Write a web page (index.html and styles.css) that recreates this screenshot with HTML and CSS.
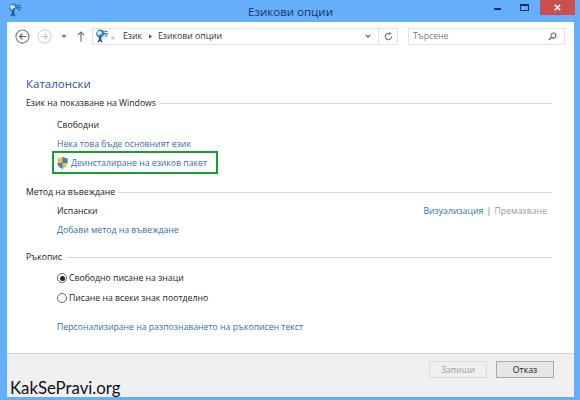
FILE: index.html
```html
<!DOCTYPE html>
<html lang="bg">
<head>
<meta charset="utf-8">
<title>Езикови опции</title>
<link rel="stylesheet" href="styles.css">
</head>
<body>
<div class="window">
  <header class="titlebar">
    <svg class="app-icon" viewBox="0 0 18 18"><circle cx="7" cy="6" r="5.5" fill="#2f7fc4"/><path d="M3 3h5l1 3-3 1-1 2-2-3zM9 8l3 1-2 2z" fill="#dff0fb"/><path d="M12 3h4M12 6h5M13 9h3" stroke="#12539a" stroke-width="1.3"/><path d="M4 17l2.500-6 2.500 6M5 15h3" stroke="#164a8e" stroke-width="1.500" fill="none"/></svg>
    <span class="title">Езикови опции</span>
    <div class="controls">
      <span class="ctl"><i class="min"></i></span>
      <span class="ctl"><i class="max"></i></span>
      <span class="close"><svg viewBox="0 0 9 9"><path d="M1 1l7 7M8 1l-7 7" stroke="#fff" stroke-width="2"/></svg></span>
    </div>
  </header>
  <div class="client">
    <nav class="navbar">
      <svg class="nav-btn" viewBox="0 0 16 16"><circle cx="8" cy="8" r="7" fill="#fff" stroke="#77797c" stroke-width="1.200"/><path d="M12 8H5M8 5L5 8l3 3" fill="none" stroke="#5d5f62" stroke-width="1.300"/></svg>
      <svg class="nav-btn dim" viewBox="0 0 16 16"><circle cx="8" cy="8" r="7" fill="#fff" stroke="#d4d5d6" stroke-width="1.200"/><path d="M4 8h7M8 5l3 3-3 3" fill="none" stroke="#c8c9ca" stroke-width="1.300"/></svg>
      <svg class="caret" viewBox="0 0 7 4"><path d="M0 0h7L3.500 4z" fill="#6c6e70"/></svg>
      <svg class="up" viewBox="0 0 9 12"><path d="M4.500 12V1M1 4.500l3.500-3.500 3.500 3.500" fill="none" stroke="#6d6f72" stroke-width="1.300"/></svg>
      <div class="address">
        <svg class="addr-icon" viewBox="0 0 18 18"><circle cx="7" cy="6" r="5.500" fill="#2f7fc4"/><path d="M3 3h5l1 3-3 1-1 2-2-3zM9 8l3 1-2 2z" fill="#dff0fb"/><path d="M12 3h4M12 6h5M13 9h3" stroke="#12539a" stroke-width="1.300"/><path d="M4 17l2.500-6 2.500 6M5 15h3" stroke="#164a8e" stroke-width="1.500" fill="none"/></svg>
        <span class="crumb-sep">«</span>
        <span class="crumb first-crumb">Език</span>
        <svg class="crumb-arrow" viewBox="0 0 4 6"><path d="M0 0l4 3-4 3z" fill="#555"/></svg>
        <span class="crumb">Езикови опции</span>
        <svg class="chevron" viewBox="0 0 8 6"><path d="M1 1l3 3 3-3" fill="none" stroke="#666" stroke-width="1.600"/></svg>
        <span class="refresh"><svg viewBox="0 0 10 10"><path d="M8.500 5A3.500 3.500 0 1 1 6.500 1.800" fill="none" stroke="#777" stroke-width="1.300"/><path d="M5.500 0l3 1.800-2.500 1.700z" fill="#777"/></svg></span>
      </div>
      <div class="search">
        <span>Търсене</span>
        <svg viewBox="0 0 10 10"><circle cx="6" cy="4" r="2.800" fill="none" stroke="#666" stroke-width="1.200"/><path d="M4 6L1 9" stroke="#666" stroke-width="1.600"/></svg>
      </div>
    </nav>
    <main class="content">
      <h1 class="heading">Каталонски</h1>
      <section class="group first">
        <h2 class="group-title">Език на показване на Windows</h2>
        <p class="row status">Свободни</p>
        <p class="row"><a class="link">Нека това бъде основният език</a></p>
        <div class="highlight">
          <svg class="shield" viewBox="0 0 12 13"><path d="M6 0l5.500 1.500V6c0 3.500-2.500 5.500-5.500 7C3 11.500.5 9.500.5 6V1.500z" fill="#e8c44a"/><path d="M6 0l5.500 1.500V6.500H6zM6 6.500V13C3 11.500.5 9.500.5 6.500z" fill="#4a7fc0"/></svg>
          <a class="link">Деинсталиране на езиков пакет</a>
        </div>
      </section>
      <section class="group method">
        <h2 class="group-title">Метод на въвеждане</h2>
        <div class="row status split">
          <span>Испански</span>
          <span class="actions"><a class="link">Визуализация</a> <b>|</b> <span class="muted">Премахване</span></span>
        </div>
        <p class="row"><a class="link">Добави метод на въвеждане</a></p>
      </section>
      <section class="group handwriting">
        <h2 class="group-title">Ръкопис</h2>
        <label class="radio-row"><span class="radio on"></span>Свободно писане на знаци</label>
        <label class="radio-row"><span class="radio"></span>Писане на всеки знак поотделно</label>
        <p class="row custom"><a class="link">Персонализиране на разпознаването на ръкописен текст</a></p>
      </section>
    </main>
    <footer class="footer">
      <button class="btn disabled">Запиши</button>
      <button class="btn">Отказ</button>
    </footer>
  </div>
  <div class="watermark">KakSePravi.org</div>
</div>
</body>
</html>
```
FILE: styles.css
```css
* { box-sizing: border-box; }
html, body { margin: 0; padding: 0; }
body { width: 580px; height: 400px; overflow: hidden; font-family: "Open Sans", "Noto Sans", sans-serif; font-size: 8.7px; color: #1c1c1c; }
.window { position: relative; width: 580px; height: 400px; background: #65aefb; padding: 0 6px 3px 7px; display: flex; flex-direction: column; }
.titlebar { height: 22px; flex: none; position: relative; display: flex; align-items: center; justify-content: center; }
.app-icon { position: absolute; left: 1px; top: 3px; width: 14px; height: 14px; }
.title { font-size: 11.5px; color: #17375e; }
.controls { position: absolute; right: -1px; top: 0; display: flex; height: 15px; }
.ctl { width: 27px; display: flex; align-items: center; justify-content: center; }
.min { width: 7px; height: 2px; margin-top: 3px; background: #10315a; }
.max { width: 9px; height: 7px; border: 1px solid #10315a; border-top-width: 2px; }
.close { width: 35px; background: #c9504f; display: flex; align-items: center; justify-content: center; margin-left: 2px; }
.close svg { width: 7px; height: 7px; }
.client { flex: 1; background: #fff; display: flex; flex-direction: column; min-height: 0; }
.navbar { height: 28px; flex: none; display: flex; align-items: center; padding: 0 10px 0 8px; }
.nav-btn { width: 15px; height: 15px; flex: none; }
.nav-btn.dim { margin-left: 7px; }
.caret { width: 6px; height: 3px; margin-left: 9px; flex: none; }
.up { width: 8px; height: 11px; margin-left: 10px; flex: none; }
.address { margin-left: 7px; width: 306px; height: 17px; border: 1px solid #e3e3e3; display: flex; align-items: center; padding-left: 2px; flex: none; }
.addr-icon { width: 14px; height: 14px; flex: none; }
.crumb-sep { margin-left: 2px; color: #888; font-size: 8px; }
.crumb { margin-left: 6px; font-size: 8.7px; color: #333; }
.crumb.first-crumb { margin-left: 8px; }
.crumb-arrow { width: 3px; height: 5px; margin-left: 7px; }
.chevron { width: 6px; height: 5px; margin-left: auto; margin-right: 7px; }
.refresh { width: 19px; height: 15px; border-left: 1px solid #e3e3e3; display: flex; align-items: center; justify-content: center; }
.refresh svg { width: 9px; height: 9px; }
.search { margin-left: 10px; width: 157px; height: 17px; border: 1px solid #e3e3e3; display: flex; align-items: center; justify-content: space-between; padding: 0 7px 0 4px; color: #7b7b7b; font-size: 8.7px; flex: none; }
.search svg { width: 9px; height: 9px; }
.content { flex: 1; padding: 0 22px 0 19px; }
.heading { margin: 26px 0 0; font-size: 11.5px; font-weight: 400; line-height: 16px; color: #2a4f9e; }
.group-title { margin: 0; display: flex; align-items: center; gap: 4px; font-size: 8.7px; font-weight: 400; line-height: 14px; color: #222; }
.group-title::after { content: ""; flex: 1; height: 1px; background: #d9d9d9; }
.group.first { margin-top: 4px; }
.row { margin: 0 0 0 31px; line-height: 14px; font-size: 8.7px; }
.first .status { margin-top: 8px; }
.method .status { margin-top: 5px; }
.row + .row { margin-top: 5px; }
.link { color: #2f6fb5; }
.highlight { margin: 0 0 0 26px; width: 166px; height: 23px; border: 2px solid #17a02f; display: flex; align-items: center; padding-left: 3px; gap: 3px; white-space: nowrap; }
.shield { width: 11px; height: 12px; flex: none; }
.method { margin-top: 11px; }
.split { display: flex; justify-content: space-between; padding-right: 5px; }
.actions b { font-weight: 400; color: #2f6fb5; margin: 0 1px; }
.muted { color: #9a9a9a; }
.handwriting { margin-top: 13px; }
.radio-row { display: flex; align-items: center; margin-left: 31px; height: 14px; margin-top: 7px; gap: 2px; }
.radio-row + .radio-row { margin-top: 6px; }
.radio { width: 10px; height: 10px; border-radius: 50%; border: 1px solid #666; background: #fff; flex: none; position: relative; }
.radio.on::after { content: ""; position: absolute; inset: 1.500px; border-radius: 50%; background: #222; }
.custom { margin-top: 15px; }
.footer { height: 44px; flex: none; background: #f0f0f0; border-top: 1px solid #d4d4d4; display: flex; justify-content: flex-end; gap: 9px; padding: 7px 20px 0 0; }
.btn { width: 58px; height: 17px; font: inherit; font-size: 8.7px; padding: 0; background: #e6e6e6; border: 1px solid #a9a9a9; color: #222; }
.btn.disabled { background: #efefef; border-color: #dcdcdc; color: #9e9e9e; }
.watermark { position: absolute; left: 10px; top: 377px; font-family: Lato, sans-serif; font-size: 16.8px; line-height: 22px; color: #111; }
```
